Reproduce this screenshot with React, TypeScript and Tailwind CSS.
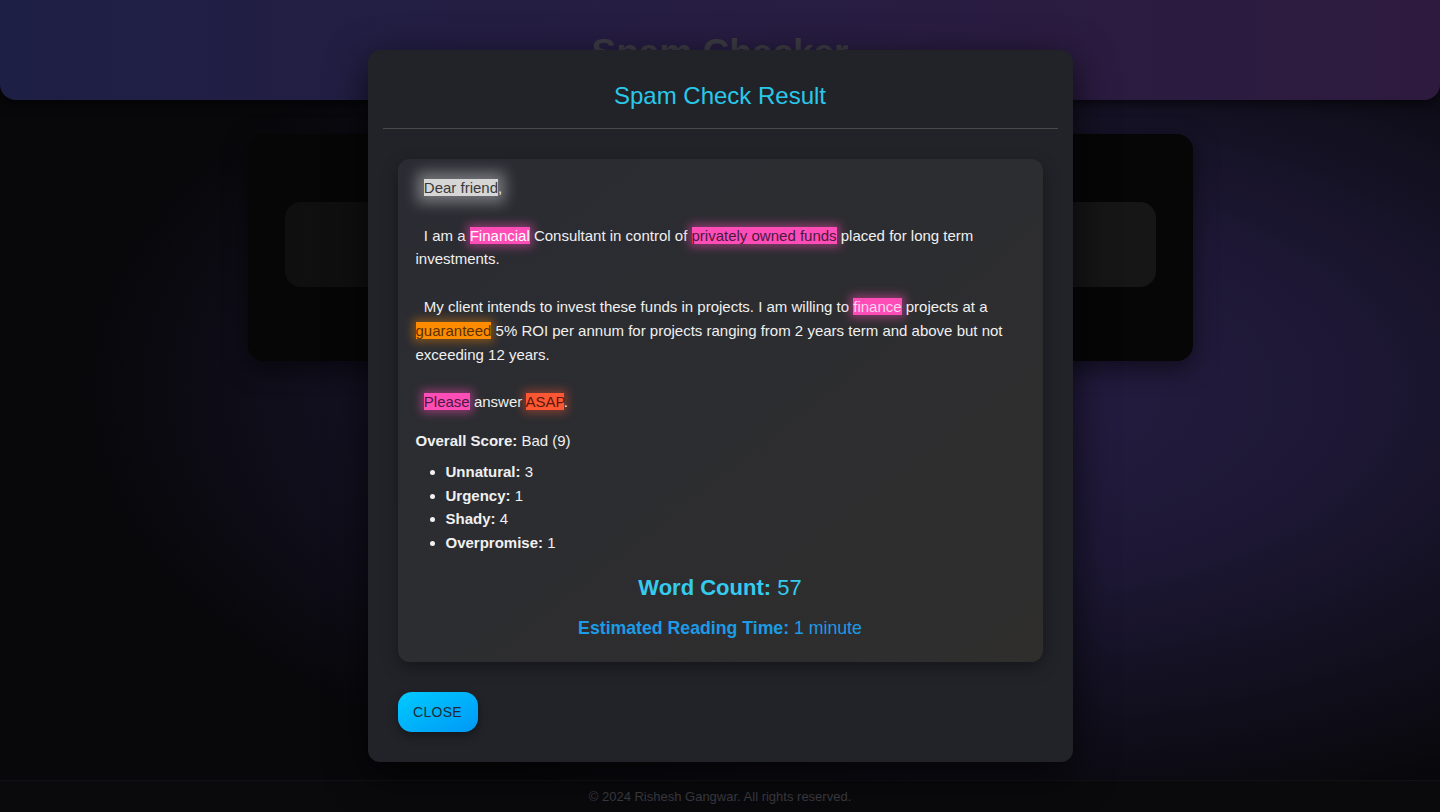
import React from "react";

type Seg = { t: string; kind?: "gray" | "pink" | "pinkDark" | "pinkLight" | "orange" | "red" };

const HL: Record<string, string> = {
  gray: "bg-[#d6d6d6] text-[#3a3a3a] shadow-[0_0_14px_7px_rgba(255,255,255,0.35)]",
  pink: "bg-[#ff4db8] text-white shadow-[0_0_10px_3px_rgba(255,77,184,0.45)]",
  pinkDark: "bg-[#ff4db8] text-[#4a1a3e] shadow-[0_0_10px_3px_rgba(255,77,184,0.45)]",
  pinkLight: "bg-[#ff4db8] text-[#ffd6f0] shadow-[0_0_10px_3px_rgba(255,77,184,0.45)]",
  orange: "bg-[#ff8c00] text-[#5a3000] shadow-[0_0_10px_3px_rgba(255,140,0,0.4)]",
  red: "bg-[#ff5733] text-[#5a1808] shadow-[0_0_10px_3px_rgba(255,87,51,0.4)]",
};

const MESSAGE: Seg[] = [
  { t: "  " },
  { t: "Dear friend", kind: "gray" },
  { t: ",\n\n  I am a " },
  { t: "Financial", kind: "pink" },
  { t: " Consultant in control of " },
  { t: "privately owned funds", kind: "pinkDark" },
  { t: " placed for long term investments.\n\n  My client intends to invest these funds in projects. I am willing to " },
  { t: "finance", kind: "pinkLight" },
  { t: " projects at a " },
  { t: "guaranteed", kind: "orange" },
  { t: " 5% ROI per annum for projects ranging from 2 years term and above but not exceeding 12 years.\n\n  " },
  { t: "Please", kind: "pinkDark" },
  { t: " answer " },
  { t: "ASAP", kind: "red" },
  { t: "." },
];

const SCORES = [
  ["Unnatural", 3],
  ["Urgency", 1],
  ["Shady", 4],
  ["Overpromise", 1],
] as const;

export default function App() {
  return (
    <div className="relative flex h-[812px] w-full flex-col overflow-hidden bg-[#08080b] font-['Liberation_Sans',Arial,sans-serif]">
      {/* page glow */}
      <div className="pointer-events-none absolute inset-0 bg-[radial-gradient(ellipse_62%_55%_at_68%_48%,#251d42_0%,#1e1836_40%,#08080b_100%)]" />

      {/* header */}
      <header className="relative flex h-[100px] shrink-0 items-center justify-center rounded-b-2xl bg-gradient-to-r from-[#1e1f45] to-[#2e1a3f] shadow-[0_4px_12px_rgba(0,0,0,0.6)]">
        <h1 className="pt-[6px] text-[37px] font-bold leading-[44px] text-[#3b3b42]">Spam Checker</h1>
      </header>

      {/* page body (behind the dialog) */}
      <main className="relative flex flex-1 justify-center pt-[34px]">
        <div className="h-[227px] w-[945px] rounded-2xl bg-[#060606] px-[37px] pt-[68px] shadow-[0_8px_24px_rgba(0,0,0,0.5)]">
          <div className="h-[85px] rounded-2xl bg-gradient-to-r from-[#0f0f0f] to-[#161616]" />
        </div>
      </main>

      <footer className="relative flex h-[32px] shrink-0 items-center justify-center border-t border-[#121216] bg-[#0a0a0d]">
        <p className="text-[13px] text-[#3c3c43]">© 2024 Rishesh Gangwar. All rights reserved.</p>
      </footer>

      {/* dialog */}
      <div className="absolute inset-0 flex items-center justify-center">
        <div className="flex h-[712px] w-[705px] flex-col rounded-xl bg-[#212329] shadow-[0_12px_40px_rgba(0,0,0,0.7)]">
          <h2 className="pb-[16px] pt-[30px] text-center text-[24px] leading-[32px] text-[#29c8ea]">Spam Check Result</h2>
          <div className="mx-[15px] h-px bg-[#4a4a4a]" />

          <div className="px-[30px] pt-[30px]">
            <div className="h-[503px] rounded-xl bg-gradient-to-br from-[#2a2c33] to-[#2f2e2d] px-[18px] pb-[24px] pt-[17px] text-[15px] text-[#f0f0f0] shadow-[0_6px_16px_rgba(0,0,0,0.35)]">
              <p className="whitespace-pre-wrap leading-[23.8px]">
                {MESSAGE.map((s, i) =>
                  s.kind ? (
                    <span key={i} className={HL[s.kind]}>
                      {s.t}
                    </span>
                  ) : (
                    <React.Fragment key={i}>{s.t}</React.Fragment>
                  )
                )}
              </p>

              <p className="mt-[15px] leading-6">
                <strong>Overall Score:</strong> Bad (9)
              </p>
              <ul className="mt-[7px] list-disc pl-[30px] leading-[23.7px]">
                {SCORES.map(([k, v]) => (
                  <li key={k}>
                    <strong>{k}:</strong> {v}
                  </li>
                ))}
              </ul>

              <p className="mt-[20px] text-center text-[22px] leading-[26px] text-[#35cbef]">
                <strong>Word Count:</strong> 57
              </p>
              <p className="mt-[17px] text-center text-[17.7px] leading-[20px] text-[#1c9be6]">
                <strong>Estimated Reading Time:</strong> 1 minute
              </p>
            </div>
          </div>

          <div className="px-[30px] pt-[30px]">
            <button className="h-[40px] w-[80px] rounded-[14px] bg-gradient-to-br from-[#00cbff] to-[#0098f5] text-[14px] tracking-[0.3px] text-[#1c2a3a] shadow-[0_4px_10px_rgba(0,0,0,0.35)]">
              CLOSE
            </button>
          </div>
        </div>
      </div>
    </div>
  );
}
